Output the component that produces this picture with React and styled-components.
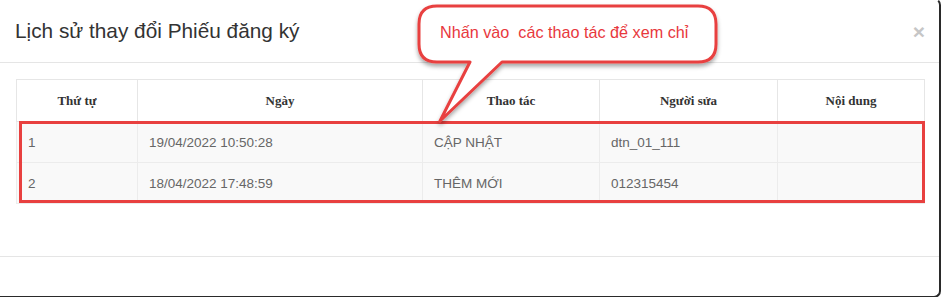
import React from 'react';
import styled, { createGlobalStyle } from 'styled-components';

const GlobalStyle = createGlobalStyle`
	html, body {
		margin: 0;
		padding: 0;
		background: #ffffff;
		overflow: hidden;
	}
	body {
		font-family: "Liberation Sans", Arial, sans-serif;
	}
`;

const columns = [
	{ key: 'stt', title: 'Thứ tự', width: 121 },
	{ key: 'date', title: 'Ngày', width: 285 },
	{ key: 'action', title: 'Thao tác', width: 177 },
	{ key: 'user', title: 'Người sửa', width: 178 },
	{ key: 'content', title: 'Nội dung', width: 147 },
];

const rows = [
	{ stt: '1', date: '19/04/2022 10:50:28', action: 'CẬP NHẬT', user: 'dtn_01_111', content: '' },
	{ stt: '2', date: '18/04/2022 17:48:59', action: 'THÊM MỚI', user: '012315454', content: '' },
];

// Modal lịch sử thay đổi
export default function App() {
	return (
		<>
			<GlobalStyle />
			<Modal>
				<Header>
					<Title>Lịch sử thay đổi Phiếu đăng ký</Title>
					<CloseBtn type="button">×</CloseBtn>
				</Header>
				<Body>
					<TableWrap>
						<Table>
							<colgroup>
								{columns.map((c) => (
									<col key={c.key} style={{ width: c.width }} />
								))}
							</colgroup>
							<thead>
								<tr>
									{columns.map((c) => (
										<Th key={c.key}>{c.title}</Th>
									))}
								</tr>
							</thead>
							<tbody>
								{rows.map((r) => (
									<tr key={r.stt}>
										{columns.map((c) => (
											<Td key={c.key}>{r[c.key]}</Td>
										))}
									</tr>
								))}
							</tbody>
						</Table>
						<Highlight />
					</TableWrap>
				</Body>
				<Footer />
				<Callout>
					<svg width="320" height="130" viewBox="0 0 320 130">
						<defs>
							<filter id="sh" x="-10%" y="-10%" width="120%" height="140%">
								<feDropShadow dx="0" dy="3" stdDeviation="2" floodColor="#000" floodOpacity="0.35" />
							</filter>
						</defs>
						<path
							d="M 25 4 H 286 Q 304 4 304 22 V 42 Q 304 60 286 60 H 90 L 28 119 L 58 60 H 25 Q 7 60 7 42 V 22 Q 7 4 25 4 Z"
							fill="#ffffff"
							stroke="#e8403f"
							strokeWidth="3"
							strokeLinejoin="round"
							filter="url(#sh)"
						/>
					</svg>
					<CalloutText>Nhấn vào&nbsp; các thao tác để xem chỉ</CalloutText>
				</Callout>
			</Modal>
		</>
	);
}

const Modal = styled.div`
	position: relative;
	width: 943px;
	height: 300px;
	margin: -2px 0 0 -2px;
	box-sizing: border-box;
	border: 2px solid #2a2a2a;
	border-left-color: transparent;
	border-top-color: transparent;
	border-radius: 0 7px 7px 0;
	background: #fff;
`;

const Header = styled.div`
	display: flex;
	align-items: center;
	justify-content: space-between;
	height: 62px;
	padding: 0 14px 0 15px;
	border-bottom: 1px solid #e5e5e5;
`;

const Title = styled.h4`
	margin: 0;
	margin-top: 0;
	font-size: 20.8px;
	font-weight: 400;
	color: #333;
`;

const CloseBtn = styled.button`
	border: none;
	background: none;
	padding: 0;
	font-family: "Liberation Sans", Arial, sans-serif;
	font-size: 21px;
	font-weight: 700;
	line-height: 1;
	color: #c6c6c6;
	cursor: pointer;
	margin-top: 1px;
`;

const Body = styled.div`
	padding: 16px 14px 52px 16px;
`;

const TableWrap = styled.div`
	position: relative;
`;

const Table = styled.table`
	width: 908px;
	border-collapse: collapse;
	table-layout: fixed;
	border: 1px solid #e6e6e6;
`;

const Th = styled.th`
	height: 41px;
	padding: 0 10px;
	border: 1px solid #e6e6e6;
	background: #fff;
	font-family: "Liberation Serif", "Times New Roman", serif;
	font-size: 13px;
	font-weight: 700;
	color: #333;
	text-align: center;
`;

const Td = styled.td`
	height: 40px;
	padding: 0 11px;
	border: 1px solid #ececec;
	background: #f9f9f9;
	font-size: 13.5px;
	color: #666;
	text-align: left;
`;

// khung đỏ đánh dấu các dòng
const Highlight = styled.div`
	position: absolute;
	left: 3px;
	top: 42px;
	width: 906px;
	height: 82px;
	box-sizing: border-box;
	border: 3px solid #e8403f;
	pointer-events: none;
`;

const Footer = styled.div`
	height: 40px;
	border-top: 1px solid #e5e5e5;
`;

const Callout = styled.div`
	position: absolute;
	left: 412px;
	top: 2px;
	width: 320px;
	height: 130px;
	pointer-events: none;
`;

const CalloutText = styled.div`
	position: absolute;
	left: 28px;
	top: 21px;
	font-size: 16.2px;
	color: #e8383d;
	white-space: nowrap;
`;
